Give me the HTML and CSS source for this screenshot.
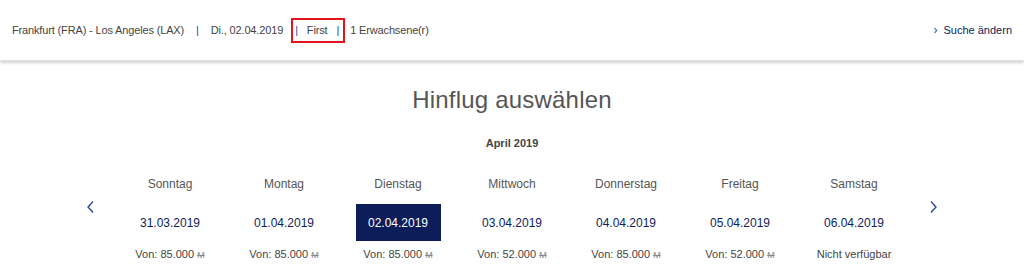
FILE: index.html
```html
<!DOCTYPE html>
<html lang="de">
<head>
    <meta charset="UTF-8">
    <title>Hinflug auswählen</title>
    <link rel="stylesheet" href="styles.css">
</head>
<body>
    <header class="summary">
        <div class="summary-info">
            <span>Frankfurt (FRA) - Los Angeles (LAX)</span>
            <span class="sep">|</span>
            <span>Di., 02.04.2019</span>
            <span class="cabin"><span class="bar">|</span>First<span class="bar">|</span></span>
            <span>1 Erwachsene(r)</span>
        </div>
        <a class="change-search" href="#"><span class="chev">&rsaquo;</span>Suche ändern</a>
    </header>

    <main class="select">
        <h1 class="title">Hinflug auswählen</h1>
        <div class="month">April 2019</div>

        <div class="week">
            <button class="nav" type="button">
                <svg width="10" height="14" viewBox="0 0 10 14"><path d="M7 1.5 L2 7 L7 12.5" fill="none" stroke="#2a4a9a" stroke-width="1.4"/></svg>
            </button>
            <div class="days">
                <div class="day">
                    <div class="day-name">Sonntag</div>
                    <div class="day-date">31.03.2019</div>
                    <div class="day-price">Von: 85.000 <span class="miles">M</span></div>
                </div>
                <div class="day">
                    <div class="day-name">Montag</div>
                    <div class="day-date">01.04.2019</div>
                    <div class="day-price">Von: 85.000 <span class="miles">M</span></div>
                </div>
                <div class="day active">
                    <div class="day-name">Dienstag</div>
                    <div class="day-date">02.04.2019</div>
                    <div class="day-price">Von: 85.000 <span class="miles">M</span></div>
                </div>
                <div class="day">
                    <div class="day-name">Mittwoch</div>
                    <div class="day-date">03.04.2019</div>
                    <div class="day-price">Von: 52.000 <span class="miles">M</span></div>
                </div>
                <div class="day">
                    <div class="day-name">Donnerstag</div>
                    <div class="day-date">04.04.2019</div>
                    <div class="day-price">Von: 85.000 <span class="miles">M</span></div>
                </div>
                <div class="day">
                    <div class="day-name">Freitag</div>
                    <div class="day-date">05.04.2019</div>
                    <div class="day-price">Von: 52.000 <span class="miles">M</span></div>
                </div>
                <div class="day">
                    <div class="day-name">Samstag</div>
                    <div class="day-date">06.04.2019</div>
                    <div class="day-price">Nicht verfügbar</div>
                </div>
            </div>
            <button class="nav" type="button">
                <svg width="10" height="14" viewBox="0 0 10 14"><path d="M3 1.5 L8 7 L3 12.5" fill="none" stroke="#2a4a9a" stroke-width="1.4"/></svg>
            </button>
        </div>
    </main>
</body>
</html>
```

FILE: styles.css
```css
body {
    margin: 0;
    background-color: #fff;
    font-family: "Liberation Sans", Arial, sans-serif;
    color: #333;
}

.summary {
    display: flex;
    justify-content: space-between;
    align-items: center;
    height: 60px;
    padding: 0 12px;
    box-shadow: 0 2px 3px rgba(0, 0, 0, 0.18);
    border-bottom: 1px solid #e2e2e2;
    font-size: 11px;
}

.summary-info {
    display: flex;
    align-items: center;
    color: #444;
    letter-spacing: -0.15px;
}

.sep {
    color: #2a4a9a;
    margin: 0 12px;
}

.cabin {
    display: flex;
    align-items: center;
    height: 21px;
    padding: 0 4px 0 2px;
    border: 2px solid #e4141f;
    margin: 0 5px 0 8px;
}

.bar {
    color: #2a4a9a;
    margin: 0 9px 0 0;
}

.bar:last-child {
    margin: 0 0 0 9px;
}

.change-search {
    color: #0c1e5b;
    text-decoration: none;
}

.chev {
    color: #2a4a9a;
    margin-right: 6px;
    font-size: 12px;
}

.select {
    display: flex;
    flex-direction: column;
    align-items: center;
}

.title {
    margin: 25px 0 0 0;
    font-size: 24px;
    font-weight: 300;
    color: #555;
    letter-spacing: 0.2px;
}

.month {
    margin-top: 23px;
    font-size: 11px;
    font-weight: bold;
    color: #444;
}

.week {
    display: flex;
    align-items: center;
    margin-top: 28px;
}

.nav {
    background: none;
    border: none;
    padding: 0;
    width: 24px;
    height: 24px;
    margin: -21px 10px 0;
    cursor: pointer;
}

.days {
    display: grid;
    grid-template-columns: repeat(7, 114px);
}

.day {
    display: flex;
    flex-direction: column;
    align-items: center;
    font-size: 12px;
}

.day-name {
    color: #555;
    height: 20px;
}

.day-date {
    display: flex;
    align-items: center;
    justify-content: center;
    width: 85px;
    height: 37px;
    margin-top: 7px;
    color: #0c1e5b;
}

.active .day-date {
    background-color: #0c1d5a;
    color: #fff;
}

.day-price {
    margin-top: 7px;
    font-size: 11px;
    color: #444;
}

.miles {
    font-size: 9px;
    color: #888;
    text-decoration: line-through;
}
```
